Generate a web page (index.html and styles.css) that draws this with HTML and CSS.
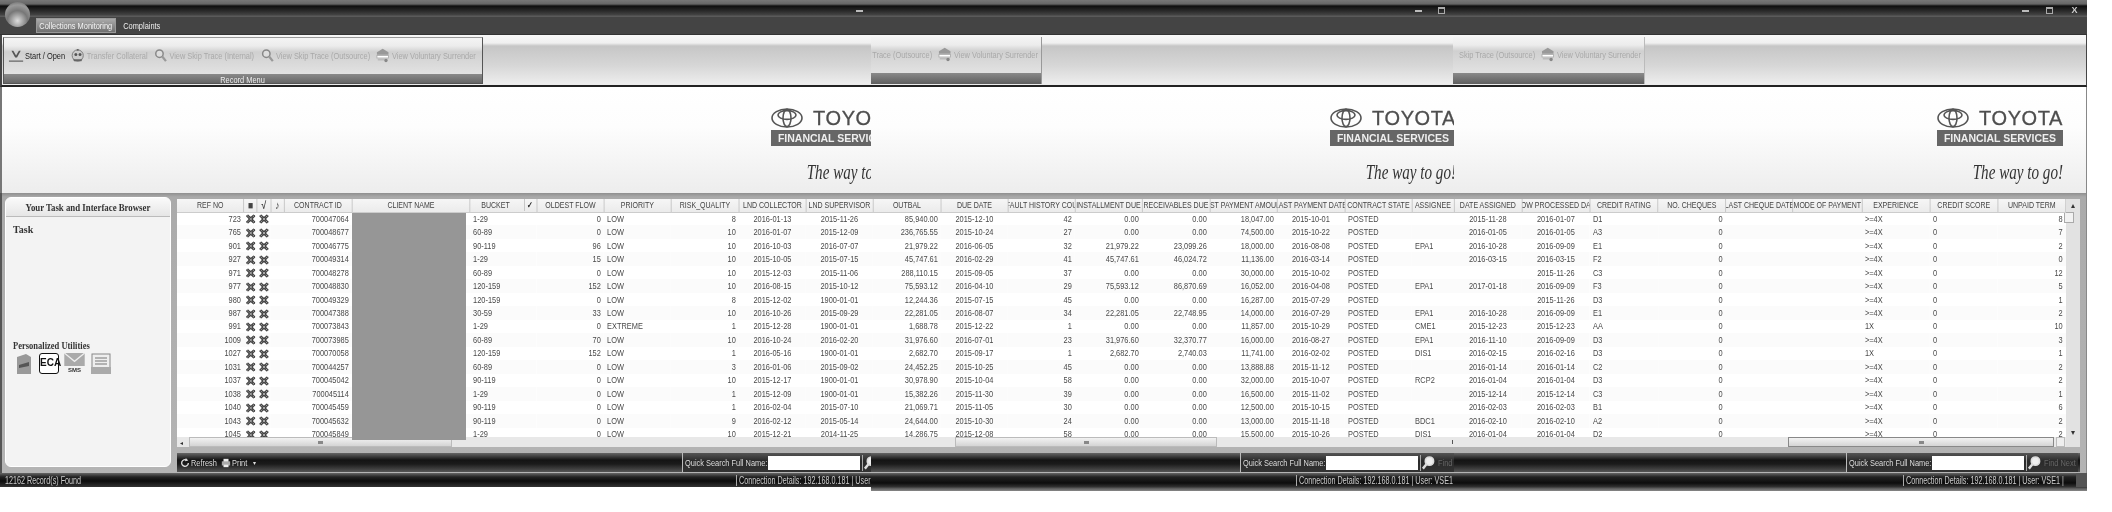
FILE: index.html
```html
<!DOCTYPE html>
<html lang="en">
<head>
<meta charset="utf-8">
<title>Collections Monitoring</title>
<link rel="stylesheet" href="styles.css">
</head>
<body>
<svg class="defs" aria-hidden="true">
<symbol id="x" viewBox="0 0 12 12" preserveAspectRatio="none"><path d="M1 1.5 3 .5 4.5 2 6 3.2 7.5 2 9 .5 11 1.5 11.5 3 9.8 4.5 8.6 6 9.8 7.5 11.5 9 11 10.5 9 11.5 7.5 10 6 8.8 4.5 10 3 11.5 1 10.5.5 9 2.2 7.5 3.4 6 2.2 4.5.5 3Z" fill="#444"/><path d="M4.500 4.500 7.500 7.500M7.500 4.500 4.500 7.500M2 2 3.500 3.500M10 2 8.500 3.500M2 10 3.500 8.500M10 10 8.500 8.500" stroke="#ccc" stroke-width=".9"/></symbol>
<symbol id="emblem" viewBox="0 0 32 20"><g fill="none" stroke="#555" stroke-width="1.6"><ellipse cx="16" cy="10" rx="15" ry="9"/><ellipse cx="16" cy="7" rx="9" ry="4.4"/><ellipse cx="16" cy="10" rx="4" ry="8.6"/></g></symbol>
<symbol id="lens" viewBox="0 0 16 16" preserveAspectRatio="none"><circle cx="7" cy="6" r="4" fill="#ddd" stroke="#888" stroke-width="1.6"/><path d="M10 9 14 14" stroke="#999" stroke-width="2.4"/></symbol>
<symbol id="surrender" viewBox="0 0 18 18" preserveAspectRatio="none"><path d="M2 5 9 1 16 5V8H2Z" fill="#999"/><rect x="2" y="9" width="14" height="3" fill="#fff" stroke="#aaa"/><rect x="3" y="13" width="12" height="2" fill="#bbb"/><circle cx="13" cy="15" r="2" fill="#888"/></symbol>
<symbol id="transfer" viewBox="0 0 16 16" preserveAspectRatio="none"><circle cx="8" cy="8" r="6" fill="#ccc" stroke="#777"/><circle cx="6" cy="7" r="1.6" fill="#555"/><circle cx="10.5" cy="7" r="1.6" fill="#555"/><path d="M3 12 13 12 12 14 4 14ZM7 1 9 1 9 3 7 3Z" fill="#666"/></symbol>
<symbol id="start" viewBox="0 0 16 16" preserveAspectRatio="none"><path d="M3 3 5 3 8 8 11 3 13 3 9 10 7 10Z" fill="#555"/><path d="M0 14H16" stroke="#666" stroke-width="1.2"/></symbol>
<symbol id="mag" viewBox="0 0 16 16"><circle cx="9" cy="6" r="4.4" fill="#eee" stroke="#ddd" stroke-width="1.8"/><path d="M6 9 2 14" stroke="#ddd" stroke-width="2.6"/></symbol>
</svg>
<div class="window">
  <header class="titlebar">
    <div class="caption-row">
      <span class="ctl min c1"></span><span class="ctl min c2"></span><span class="ctl max c3"></span><span class="ctl min c4"></span><span class="ctl max c5"></span><span class="ctl close c6">X</span>
    </div>
    <nav class="tabs"><span class="tab active"><span class="sqc">Collections Monitoring</span></span><span class="tab"><span class="sqc">Complaints</span></span></nav>
    <div class="orb"></div>
  </header>
  <section class="ribbon">
    <div class="group g1">
      <div class="cmds">
        <span class="cmd on"><svg class="ico"><use href="#start"/></svg>Start / Open</span>
        <span class="cmd"><svg class="ico"><use href="#transfer"/></svg>Transfer Collateral</span>
        <span class="cmd"><svg class="ico"><use href="#lens"/></svg>View Skip Trace (Internal)</span>
        <span class="cmd"><svg class="ico"><use href="#lens"/></svg>View Skip Trace (Outsource)</span>
        <span class="cmd"><svg class="ico"><use href="#surrender"/></svg>View Voluntary Surrender</span>
      </div>
      <div class="gcap"><span class="sqc">Record Menu</span></div>
    </div>
    <div class="group g2">
      <div class="cmds end">
        <span class="cmd">Trace (Outsource)</span>
        <span class="cmd"><svg class="ico"><use href="#surrender"/></svg>View Voluntary Surrender</span>
      </div>
      <div class="gcap"></div>
    </div>
    <div class="group g3">
      <div class="cmds end">
        <span class="cmd">Skip Trace (Outsource)</span>
        <span class="cmd"><svg class="ico"><use href="#surrender"/></svg>View Voluntary Surrender</span>
      </div>
      <div class="gcap"></div>
    </div>
  </section>
  <section class="banner">
    <div class="bcell b1"><div class="logo"><div class="mark"><svg class="emblem"><use href="#emblem"/></svg><span class="brand">TOYOTA</span></div><div class="fin">FINANCIAL SERVICES</div><div class="way">The way to go!</div></div></div>
    <div class="bcell b2"><div class="logo"><div class="mark"><svg class="emblem"><use href="#emblem"/></svg><span class="brand">TOYOTA</span></div><div class="fin">FINANCIAL SERVICES</div><div class="way">The way to go!</div></div></div>
    <div class="bcell b3"><div class="logo"><div class="mark"><svg class="emblem"><use href="#emblem"/></svg><span class="brand">TOYOTA</span></div><div class="fin">FINANCIAL SERVICES</div><div class="way">The way to go!</div></div></div>
  </section>
  <section class="work">
    <aside class="side">
      <h2 class="side-head"><span class="sqc">Your Task and Interface Browser</span></h2>
      <h3 class="side-task">Task</h3>
      <h3 class="side-util"><span class="sq">Personalized Utilities</span></h3>
      <div class="utils">
        <svg class="u-doc" viewBox="0 0 16 22"><path d="M1 4 10 1 15 4V21H1Z" fill="#999"/><path d="M3 12 13 9V13L3 15Z" fill="#555"/></svg>
        <span class="u-eca">ECA</span>
        <span class="u-sms"><svg class="u-env" viewBox="0 0 22 14"><rect width="22" height="14" fill="#aaa"/><path d="M0 0 11 9 22 0" fill="none" stroke="#eee" stroke-width="1.4"/></svg>SMS</span>
        <svg class="u-form" viewBox="0 0 22 22"><rect x="2" y="1" width="18" height="15" fill="#eee" stroke="#888"/><path d="M5 5H17M5 8H17M5 11H17" stroke="#777"/><path d="M1 14H21V21H1Z" fill="#aaa"/></svg>
      </div>
    </aside>
    <div class="main">
      <div class="gridbox">
        <div class="tablearea">
          <div class="tableclip">
<table class="grid">
<colgroup><col class="w67"><col class="w13"><col class="w14"><col class="w13"><col class="w68"><col class="w118"><col class="w67"><col class="w67"><col class="w67"><col class="w68"><col class="w67"><col class="w67"><col class="w68"><col class="w67"><col class="w67"><col class="w67"><col class="w68"><col class="w67"><col class="w68"><col class="w67"><col class="w42"><col class="w68"><col class="w68"><col class="w68"><col class="w68"><col class="w67"><col class="w69"><col class="w68"><col class="w68"><col class="w68"></colgroup>
<thead><tr><th><div>REF NO</div><th><div>■</div><th><div>√</div><th><div>♪</div><th><div>CONTRACT ID</div><th><div>CLIENT NAME</div><th><div class="split"><span>BUCKET</span><b>✓</b></div><th><div>OLDEST FLOW</div><th><div>PRIORITY</div><th><div>RISK_QUALITY</div><th><div>LND COLLECTOR</div><th><div>LND SUPERVISOR</div><th><div>OUTBAL</div><th><div>DUE DATE</div><th><div>DEFAULT HISTORY COUNT</div><th><div>INSTALLMENT DUE</div><th><div>RECEIVABLES DUE</div><th><div>LAST PAYMENT AMOUNT</div><th><div>LAST PAYMENT DATE</div><th><div>CONTRACT STATE</div><th><div>ASSIGNEE</div><th><div>DATE ASSIGNED</div><th><div>FLOW PROCESSED DATE</div><th><div>CREDIT RATING</div><th><div>NO. CHEQUES</div><th><div>LAST CHEQUE DATE</div><th><div>MODE OF PAYMENT</div><th><div>EXPERIENCE</div><th><div>CREDIT SCORE</div><th><div>UNPAID TERM</div></tr></thead>
<tbody>
<tr><td>723<td><svg class="xi"><use href="#x"/></svg><td><svg class="xi"><use href="#x"/></svg><td><td>700047064<td><td>1-29<td>0<td>LOW<td>8<td>2016-01-13<td>2015-11-26<td>85,940.00<td>2015-12-10<td>42<td>0.00<td>0.00<td>18,047.00<td>2015-10-01<td>POSTED<td><td>2015-11-28<td>2016-01-07<td>D1<td>0<td><td><td>&gt;=4X<td>0<td>8</tr>
<tr><td>765<td><svg class="xi"><use href="#x"/></svg><td><svg class="xi"><use href="#x"/></svg><td><td>700048677<td><td>60-89<td>0<td>LOW<td>10<td>2016-01-07<td>2015-12-09<td>236,765.55<td>2015-10-24<td>27<td>0.00<td>0.00<td>74,500.00<td>2015-10-22<td>POSTED<td><td>2016-01-05<td>2016-01-05<td>A3<td>0<td><td><td>&gt;=4X<td>0<td>7</tr>
<tr><td>901<td><svg class="xi"><use href="#x"/></svg><td><svg class="xi"><use href="#x"/></svg><td><td>700046775<td><td>90-119<td>96<td>LOW<td>10<td>2016-10-03<td>2016-07-07<td>21,979.22<td>2016-06-05<td>32<td>21,979.22<td>23,099.26<td>18,000.00<td>2016-08-08<td>POSTED<td>EPA1<td>2016-10-28<td>2016-09-09<td>E1<td>0<td><td><td>&gt;=4X<td>0<td>2</tr>
<tr><td>927<td><svg class="xi"><use href="#x"/></svg><td><svg class="xi"><use href="#x"/></svg><td><td>700049314<td><td>1-29<td>15<td>LOW<td>10<td>2015-10-05<td>2015-07-15<td>45,747.61<td>2016-02-29<td>41<td>45,747.61<td>46,024.72<td>11,136.00<td>2016-03-14<td>POSTED<td><td>2016-03-15<td>2016-03-15<td>F2<td>0<td><td><td>&gt;=4X<td>0<td>0</tr>
<tr><td>971<td><svg class="xi"><use href="#x"/></svg><td><svg class="xi"><use href="#x"/></svg><td><td>700048278<td><td>60-89<td>0<td>LOW<td>10<td>2015-12-03<td>2015-11-06<td>288,110.15<td>2015-09-05<td>37<td>0.00<td>0.00<td>30,000.00<td>2015-10-02<td>POSTED<td><td><td>2015-11-26<td>C3<td>0<td><td><td>&gt;=4X<td>0<td>12</tr>
<tr><td>977<td><svg class="xi"><use href="#x"/></svg><td><svg class="xi"><use href="#x"/></svg><td><td>700048830<td><td>120-159<td>152<td>LOW<td>10<td>2016-08-15<td>2015-10-12<td>75,593.12<td>2016-04-10<td>29<td>75,593.12<td>86,870.69<td>16,052.00<td>2016-04-08<td>POSTED<td>EPA1<td>2017-01-18<td>2016-09-09<td>F3<td>0<td><td><td>&gt;=4X<td>0<td>5</tr>
<tr><td>980<td><svg class="xi"><use href="#x"/></svg><td><svg class="xi"><use href="#x"/></svg><td><td>700049329<td><td>120-159<td>0<td>LOW<td>8<td>2015-12-02<td>1900-01-01<td>12,244.36<td>2015-07-15<td>45<td>0.00<td>0.00<td>16,287.00<td>2015-07-29<td>POSTED<td><td><td>2015-11-26<td>D3<td>0<td><td><td>&gt;=4X<td>0<td>1</tr>
<tr><td>987<td><svg class="xi"><use href="#x"/></svg><td><svg class="xi"><use href="#x"/></svg><td><td>700047388<td><td>30-59<td>33<td>LOW<td>10<td>2016-10-26<td>2015-09-29<td>22,281.05<td>2016-08-07<td>34<td>22,281.05<td>22,748.95<td>14,000.00<td>2016-07-29<td>POSTED<td>EPA1<td>2016-10-28<td>2016-09-09<td>E1<td>0<td><td><td>&gt;=4X<td>0<td>2</tr>
<tr><td>991<td><svg class="xi"><use href="#x"/></svg><td><svg class="xi"><use href="#x"/></svg><td><td>700073843<td><td>1-29<td>0<td>EXTREME<td>1<td>2015-12-28<td>1900-01-01<td>1,688.78<td>2015-12-22<td>1<td>0.00<td>0.00<td>11,857.00<td>2015-10-29<td>POSTED<td>CME1<td>2015-12-23<td>2015-12-23<td>AA<td>0<td><td><td>1X<td>0<td>10</tr>
<tr><td>1009<td><svg class="xi"><use href="#x"/></svg><td><svg class="xi"><use href="#x"/></svg><td><td>700073985<td><td>60-89<td>70<td>LOW<td>10<td>2016-10-24<td>2016-02-20<td>31,976.60<td>2016-07-01<td>23<td>31,976.60<td>32,370.77<td>16,000.00<td>2016-08-27<td>POSTED<td>EPA1<td>2016-11-10<td>2016-09-09<td>D3<td>0<td><td><td>&gt;=4X<td>0<td>3</tr>
<tr><td>1027<td><svg class="xi"><use href="#x"/></svg><td><svg class="xi"><use href="#x"/></svg><td><td>700070058<td><td>120-159<td>152<td>LOW<td>1<td>2016-05-16<td>1900-01-01<td>2,682.70<td>2015-09-17<td>1<td>2,682.70<td>2,740.03<td>11,741.00<td>2016-02-02<td>POSTED<td>DIS1<td>2016-02-15<td>2016-02-16<td>D3<td>0<td><td><td>1X<td>0<td>1</tr>
<tr><td>1031<td><svg class="xi"><use href="#x"/></svg><td><svg class="xi"><use href="#x"/></svg><td><td>700044257<td><td>60-89<td>0<td>LOW<td>3<td>2016-01-06<td>2015-09-02<td>24,452.25<td>2015-10-25<td>45<td>0.00<td>0.00<td>13,888.88<td>2015-11-12<td>POSTED<td><td>2016-01-14<td>2016-01-14<td>C2<td>0<td><td><td>&gt;=4X<td>0<td>2</tr>
<tr><td>1037<td><svg class="xi"><use href="#x"/></svg><td><svg class="xi"><use href="#x"/></svg><td><td>700045042<td><td>90-119<td>0<td>LOW<td>10<td>2015-12-17<td>1900-01-01<td>30,978.90<td>2015-10-04<td>58<td>0.00<td>0.00<td>32,000.00<td>2015-10-07<td>POSTED<td>RCP2<td>2016-01-04<td>2016-01-04<td>D3<td>0<td><td><td>&gt;=4X<td>0<td>2</tr>
<tr><td>1038<td><svg class="xi"><use href="#x"/></svg><td><svg class="xi"><use href="#x"/></svg><td><td>700045114<td><td>1-29<td>0<td>LOW<td>1<td>2015-12-09<td>1900-01-01<td>15,382.26<td>2015-11-30<td>39<td>0.00<td>0.00<td>16,500.00<td>2015-11-02<td>POSTED<td><td>2015-12-14<td>2015-12-14<td>C3<td>0<td><td><td>&gt;=4X<td>0<td>1</tr>
<tr><td>1040<td><svg class="xi"><use href="#x"/></svg><td><svg class="xi"><use href="#x"/></svg><td><td>700045459<td><td>90-119<td>0<td>LOW<td>1<td>2016-02-04<td>2015-07-10<td>21,069.71<td>2015-11-05<td>30<td>0.00<td>0.00<td>12,500.00<td>2015-10-15<td>POSTED<td><td>2016-02-03<td>2016-02-03<td>B1<td>0<td><td><td>&gt;=4X<td>0<td>6</tr>
<tr><td>1043<td><svg class="xi"><use href="#x"/></svg><td><svg class="xi"><use href="#x"/></svg><td><td>700045632<td><td>90-119<td>0<td>LOW<td>9<td>2016-02-12<td>2015-05-14<td>24,644.00<td>2015-10-30<td>24<td>0.00<td>0.00<td>13,000.00<td>2015-11-18<td>POSTED<td>BDC1<td>2016-02-10<td>2016-02-10<td>A2<td>0<td><td><td>&gt;=4X<td>0<td>2</tr>
<tr><td>1045<td><svg class="xi"><use href="#x"/></svg><td><svg class="xi"><use href="#x"/></svg><td><td>700045849<td><td>1-29<td>0<td>LOW<td>10<td>2015-12-21<td>2014-11-25<td>14,286.75<td>2015-12-08<td>58<td>0.00<td>0.00<td>15,500.00<td>2015-10-26<td>POSTED<td>DIS1<td>2016-01-04<td>2016-01-04<td>D2<td>0<td><td><td>&gt;=4X<td>0<td>2</tr>
</tbody>
</table>
          </div>
          <div class="hscroll">
            <span class="harrow">◂</span>
            <span class="thumb t1"><i></i></span>
            <span class="thumb t2"><i></i></span>
            <span class="tick"></span>
            <span class="thumb t3"><i></i></span>
            <span class="hbtn"></span>
          </div>
        </div>
        <div class="vscroll"><span class="varrow">▴</span><span class="vthumb"></span><span class="varrow down">▾</span></div>
        <div class="redact"></div>
      </div>
      <div class="toolbar">
        <div class="tcell tc1">
          <span class="tbtn refresh"><svg class="tico" viewBox="0 0 12 12"><path d="M10 6A4 4 0 1 1 8 2.500" fill="none" stroke="#ddd" stroke-width="1.6"/><path d="M7 0 10 3 6 4Z" fill="#ddd"/></svg><span class="sq">Refresh</span></span>
          <span class="tbtn print"><svg class="tico" viewBox="0 0 12 12"><rect x="3" y="1" width="6" height="4" fill="#eee"/><rect x="1" y="4" width="10" height="5" fill="#aaa"/><rect x="3" y="8" width="6" height="3" fill="#eee"/></svg><span class="sq">Print</span></span>
          <span class="tdrop">▾</span>
          <div class="qs q1"><span class="qlabel"><span class="sq">Quick Search Full Name:</span></span><input class="qinput" aria-label="Quick Search Full Name"><svg class="qico"><use href="#mag"/></svg><span class="qfind"><span class="sq">Find Next</span></span></div>
        </div>
        <div class="tcell tc2">
          <div class="qs q2"><span class="qlabel"><span class="sq">Quick Search Full Name:</span></span><input class="qinput" aria-label="Quick Search Full Name"><svg class="qico"><use href="#mag"/></svg><span class="qfind"><span class="sq">Find Next</span></span></div>
        </div>
        <div class="tcell tc3">
          <div class="qs q3"><span class="qlabel"><span class="sq">Quick Search Full Name:</span></span><input class="qinput" aria-label="Quick Search Full Name"><svg class="qico"><use href="#mag"/></svg><span class="qfind"><span class="sq">Find Next</span></span></div>
        </div>
      </div>
    </div>
  </section>
  <footer class="status">
    <div class="scell s1"><span class="count"><span class="sq">12162 Record(s) Found</span></span><span class="conn c-a"><span class="sq">Connection Details: 192.168.0.181 | User: VSE1 |</span></span></div>
    <div class="scell s2"><span class="conn c-b"><span class="sq">Connection Details: 192.168.0.181 | User: VSE1 |</span></span></div>
    <div class="scell s3"><span class="conn c-c"><span class="sq">Connection Details: 192.168.0.181 | User: VSE1 |</span></span><span class="grip"></span></div>
  </footer>
</div>
</body>
</html>
```
FILE: styles.css
```css
:root { --sq: .78; }
* { box-sizing: border-box; }
html, body { margin: 0; padding: 0; background: #fff; }
body { width: 2112px; height: 512px; overflow: hidden; font: 9.500px "Liberation Sans", sans-serif; color: #444; }
.defs { display: none; }
.window { width: 2087px; filter: blur(.35px) grayscale(1); }
.sq, .sqc { display: inline-block; white-space: nowrap; transform: scaleX(var(--sq)); }
.sq { transform-origin: 0 50%; }
.sqc { transform-origin: 50% 50%; }

.titlebar { position: relative; height: 35px; background: #444; border-bottom: 1px solid #333; }
.caption-row { display: flex; align-items: center; height: 17px; padding-top: 4px; background: linear-gradient(#777 0, #666 4px, #0e0e0e 6px, #2b2b2b 11px, #444 15px, #5a5a5a 16px); }
.ctl { display: block; flex: none; width: 7px; }
.min { height: 2px; background: #bbb; }
.max { height: 7px; border: 1px solid #aaa; border-top-width: 2px; }
.close { color: #ccc; font: bold 9px/9px "Liberation Sans", sans-serif; text-align: center; }
.c1 { margin-left: 856px; }
.c2 { margin-left: 552px; }
.c3 { margin-left: 16px; }
.c4 { margin-left: 577px; }
.c5 { margin-left: 17px; }
.c6 { margin-left: 18px; }
.tabs { display: flex; align-items: center; gap: 7px; height: 17px; padding-left: 36px; color: #eee; }
.tab { display: flex; justify-content: center; width: 37px; font-size: 9.500px; line-height: 15px; white-space: nowrap; }
.tab.active { width: 80px; height: 15px; background: linear-gradient(#aaa, #707070); border: 1px solid #999; line-height: 13px; color: #f4f4f4; }
.orb { position: absolute; left: 5px; top: 2px; width: 25px; height: 25px; border-radius: 50%; background: radial-gradient(circle at 50% 75%, #ddd 0, #777 45%, #999 70%, #555 100%); }

.ribbon { display: flex; height: 52px; padding-top: 2px; border-bottom: 2px solid #222; border-left: 2px solid #444; border-right: 1px solid #444; background: linear-gradient(#f8f8f8 0, #f0f0f0 8px, #c6c6c6 11px, #d6d6d6 30px, #ececec 48px); }
.group { display: flex; flex-direction: column; height: 47px; background: linear-gradient(#f4f4f4 0, #ececec 8px, #d0d0d0 14px, #e2e2e2 36px); overflow: hidden; }
.g1 { width: 480px; margin-left: 1px; border: 1px solid #555; border-top-color: #999; }
.g2 { width: 171px; margin-left: 388px; border-right: 1px solid #999; }
.g3 { width: 192px; margin-left: 411px; border-right: 1px solid #bbb; }
.cmds { display: flex; flex: none; align-items: center; gap: 7px; width: calc(100% / var(--sq)); height: 36px; padding: 0 4px 2px 6px; white-space: nowrap; transform: scaleX(var(--sq)); transform-origin: 0 0; }
.cmds.end { justify-content: flex-end; }
.cmd { display: flex; flex: none; align-items: center; gap: 2px; color: #a9a9a9; font-size: 9.500px; }
.cmd.on { color: #222; }
.ico { flex: none; width: 19px; height: 15px; }
.gcap { display: flex; justify-content: center; flex: 1; background: linear-gradient(#8a8a8a, #5f5f5f); color: #eee; font-size: 9.500px; line-height: 11px; }

.banner { display: flex; height: 106px; padding-top: 21px; border-left: 2px solid #777; border-right: 1px solid #888; background: linear-gradient(#fff 0, #fdfdfd 40px, #ededed 106px); }
.bcell { overflow: hidden; flex: none; }
.b1 { width: 869px; padding-left: 769px; }
.b2 { width: 583px; padding-left: 459px; }
.b3 { width: 632px; padding-left: 483px; }
.logo { width: 126px; }
.mark { display: flex; align-items: center; justify-content: space-between; height: 20px; }
.emblem { flex: none; width: 32px; height: 20px; }
.brand { font: 20px/20px "Liberation Sans", sans-serif; letter-spacing: .6px; color: #4e4e4e; -webkit-text-stroke: .3px #4e4e4e; }
.fin { height: 16px; margin-top: 2px; background: #666; color: #eee; font: bold 10.500px/16px "Liberation Sans", sans-serif; text-align: center; white-space: nowrap; overflow: hidden; }
.way { margin-top: 15px; font: italic 21px/22px "Liberation Serif", serif; color: #333; text-align: right; white-space: nowrap; transform: scaleX(.72); transform-origin: 100% 50%; }

.work { display: flex; height: 280px; padding: 0 6px 0 0; border-left: 2px solid #555; border-right: 1px solid #888; background: linear-gradient(#8f8f8f 0, #aaa 4px, #b4b4b4 100%); }
.side { width: 166px; height: 270px; margin: 4px 0 0 3px; background: #f3f3f3; border: 1px solid #fff; border-radius: 6px; flex: none; }
.side-head { height: 19px; margin: 0; background: linear-gradient(#fafafa, #e6e6e6); border-bottom: 1px solid #bbb; border-radius: 5px 5px 0 0; text-align: center; font: bold 10px/20px "Liberation Serif", serif; color: #333; }
.side-head .sqc { --sq: .88; }
.side-task, .side-util { margin: 0; padding-left: 7px; font: bold 10px/12px "Liberation Serif", serif; color: #333; }
.side-task { margin-top: 7px; }
.side-util { margin-top: 104px; }
.side-util .sq { --sq: .85; }
.utils { display: flex; align-items: flex-start; gap: 5px; margin: 1px 0 0 10px; height: 22px; }
.utils svg { flex: none; }
.u-doc { width: 16px; height: 22px; margin-right: 2px; }
.u-eca { display: block; width: 20px; height: 21px; border: 1.500px solid #111; border-radius: 3px; background: #fff; color: #111; font: bold 10px/18px "Liberation Sans", sans-serif; text-align: center; }
.u-sms { display: flex; flex-direction: column; align-items: center; width: 21px; font: bold 6px/8px "Liberation Sans", sans-serif; color: #333; }
.u-env { width: 21px; height: 13px; }
.u-form { width: 22px; height: 22px; }

.main { display: flex; flex-direction: column; flex: none; width: 1903px; margin: 6px 0 0 6px; }
.gridbox { position: relative; display: flex; height: 248px; background: #e6e6e6; }
.tablearea { display: flex; flex-direction: column; flex: none; width: 1889px; }
.tableclip { height: 238px; overflow: hidden; background: #fff; }
.grid { width: calc(1889px / var(--sq)); table-layout: fixed; border-collapse: collapse; font-size: 9.500px; transform: scaleX(var(--sq)); transform-origin: 0 0; }
.w13 { width: calc(13px / var(--sq)); } .w14 { width: calc(14px / var(--sq)); } .w42 { width: calc(42px / var(--sq)); } .w67 { width: calc(67px / var(--sq)); } .w68 { width: calc(68px / var(--sq)); } .w69 { width: calc(69px / var(--sq)); } .w118 { width: calc(118px / var(--sq)); }
.grid th { height: 13px; padding: 0; font-weight: normal; font-size: 9px; background: linear-gradient(#f6f6f6, #ebebeb); border-right: 1px solid #bbb; border-bottom: 1px solid #ccc; color: #444; }
.grid th:nth-child(2), .grid th:nth-child(3), .grid th:nth-child(4) { font-size: 11px; font-weight: bold; }
.grid th > div { display: flex; justify-content: center; overflow: hidden; white-space: nowrap; line-height: 12px; }
.grid th > .split { justify-content: flex-start; padding-left: 14px; gap: 18px; }
.split b { font-weight: bold; color: #222; padding-left: 3px; border-left: 1px solid #bbb; }
.grid td { height: 13.470px; padding: 0 4px; white-space: nowrap; overflow: hidden; line-height: 12px; color: #4a4a4a; }
.grid tr:nth-child(even) td { background: #fbfbfb; }
.grid td:nth-child(1), .grid td:nth-child(5), .grid td:nth-child(8), .grid td:nth-child(10), .grid td:nth-child(13), .grid td:nth-child(15), .grid td:nth-child(16), .grid td:nth-child(17), .grid td:nth-child(18), .grid td:nth-child(25), .grid td:nth-child(30) { text-align: right; }
.grid td:nth-child(11), .grid td:nth-child(12), .grid td:nth-child(14), .grid td:nth-child(19), .grid td:nth-child(22), .grid td:nth-child(23) { text-align: center; }
.grid td:nth-child(2), .grid td:nth-child(3) { padding: 0; text-align: center; }
.xi { display: block; width: 13px; height: 10px; margin: 1px auto 0; }

.hscroll { display: flex; align-items: center; height: 10px; background: #e8e8e8; }
.harrow { width: 12px; padding-left: 3px; font-size: 6px; color: #333; }
.thumb { display: flex; align-items: center; justify-content: center; height: 10px; flex: none; background: linear-gradient(#f2f2f2, #d4d4d4); border: 1px solid #bbb; }
.thumb i { display: block; width: 5px; height: 3px; background: #888; }
.t1 { width: 263px; }
.t2 { width: 262px; margin-left: 503px; }
.tick { width: 1px; height: 4px; margin-left: 235px; background: #555; flex: none; }
.t3 { width: 266px; margin-left: 335px; border-color: #888; }
.hbtn { width: 9px; height: 10px; margin-left: 2px; background: #eee; border: 1px solid #bbb; flex: none; }
.vscroll { display: flex; flex-direction: column; align-items: center; width: 14px; flex: none; background: #e2e2e2; }
.varrow { height: 13px; font-size: 8px; line-height: 13px; color: #333; }
.varrow.down { margin-top: auto; margin-bottom: 8px; }
.vthumb { width: 10px; height: 11px; margin-left: -8px; background: #f2f2f2; border: 1px solid #aaa; }
.redact { position: absolute; left: 175px; top: 14px; width: 114px; height: 227px; background: #969696; }

.toolbar { display: flex; height: 19px; margin-top: 6px; color: #ddd; background: linear-gradient(#666 0, #141414 7px, #1b1b1b 11px, #555 19px); }
.tcell { display: flex; align-items: center; flex: none; overflow: hidden; }
.tc1 { width: 694px; padding-left: 3px; }
.tc2 { width: 583px; justify-content: flex-end; }
.tc3 { width: 626px; justify-content: flex-end; }
.tbtn { display: flex; align-items: center; gap: 1px; flex: none; font-size: 9.500px; }
.refresh { width: 41px; }
.print { width: 32px; }
.tico { width: 10px; height: 12px; flex: none; }
.tdrop { font-size: 6px; }
.qs { display: flex; align-items: center; flex: none; width: 232px; height: 19px; border-left: 1px solid #bbb; padding-left: 2px; background: linear-gradient(#555, #2a2a2a 8px, #333 19px); }
.q1 { margin-left: auto; margin-right: -43px; }
.q2 { margin-right: -18px; }
.q3 { margin-right: 2px; }
.qlabel { flex: none; width: 82px; white-space: nowrap; font-size: 9.500px; color: #ddd; }
.qinput { flex: none; width: 92px; height: 14px; margin: 0 2px 0 1px; padding: 0; border: 0; background: #fff; }
.qico { flex: none; width: 16px; height: 16px; border-left: 1px solid #aaa; }
.qfind { flex: none; margin-left: 2px; color: #666; white-space: nowrap; }

.status { display: flex; align-items: flex-start; color: #ccc; font-size: 10px; }
.status .sq { --sq: .72; }
.scell { display: flex; align-items: center; flex: none; overflow: hidden; white-space: nowrap; background: linear-gradient(#666 0, #222 4px, #0c0c0c 8px, #333 14px); }
.s1 { width: 871px; height: 14px; padding-left: 5px; }
.s2 { width: 583px; height: 18px; padding-bottom: 4px; background: linear-gradient(#666 0, #222 4px, #0c0c0c 10px, #333 14px, #555 15px, #888 18px); }
.s3 { width: 633px; height: 18px; padding-bottom: 4px; justify-content: flex-end; background: linear-gradient(#666 0, #222 4px, #0c0c0c 10px, #333 14px, #555 15px, #888 18px); }
.count { width: 731px; flex: none; }
.conn { flex: none; display: block; overflow: hidden; border-left: 1px solid #aaa; padding-left: 2px; }
.c-a { width: 135px; }
.c-b { width: 158px; margin-left: 425px; }
.c-c { width: 168px; }
.grip { width: 11px; height: 14px; margin-left: 5px; background: #555; flex: none; }
```
